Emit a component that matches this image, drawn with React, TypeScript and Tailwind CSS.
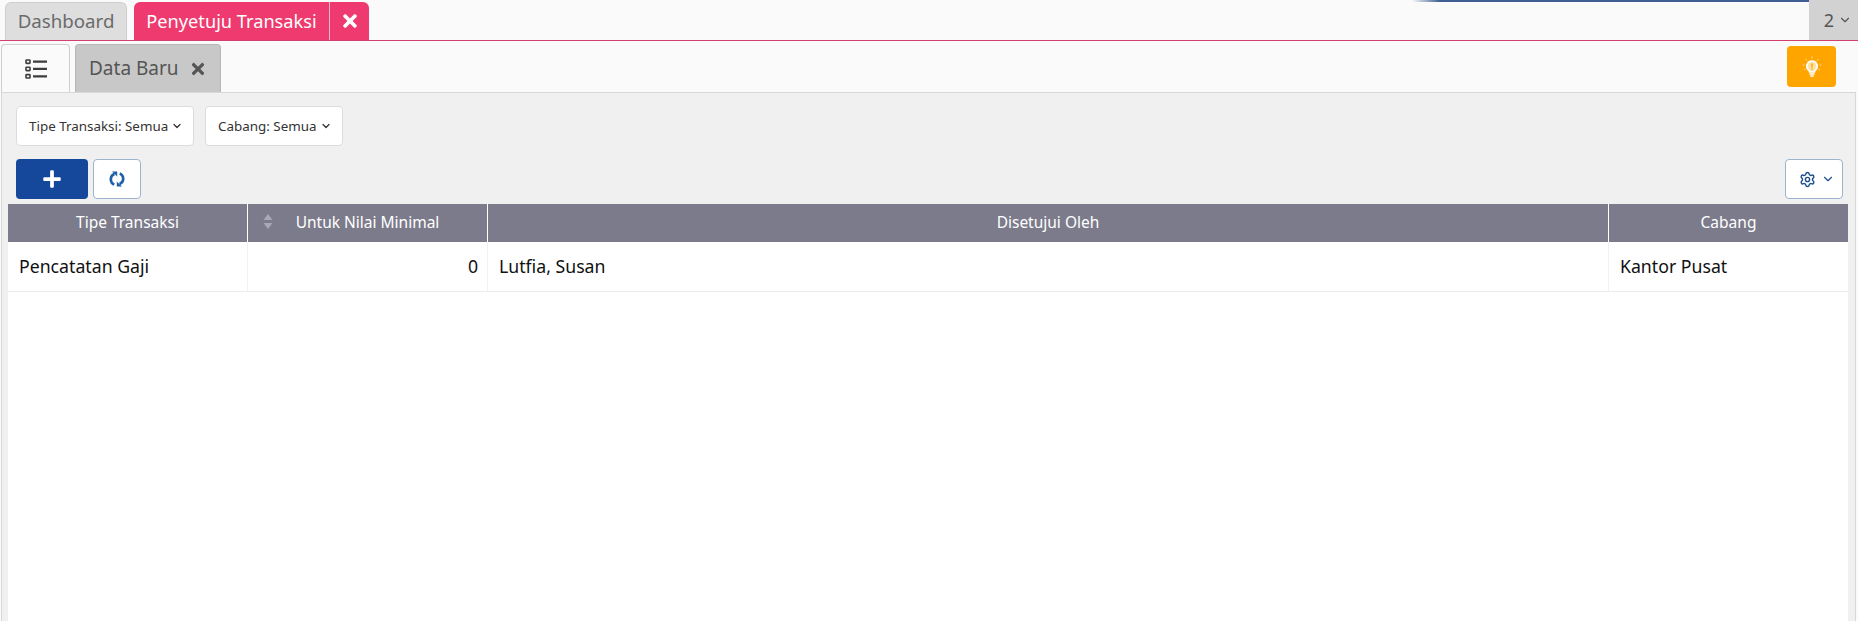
import { ChevronDown, Settings } from 'lucide-react';
import { FaPlus, FaTimes } from 'react-icons/fa';

const font = "font-['Noto_Sans',sans-serif]";

const ListIcon = () => (
  <svg width="24" height="22" viewBox="0 0 24 22" fill="none" stroke="#3d3d3d" strokeWidth="2">
    <rect x="2" y="2" width="4" height="3.4" rx="0.6" strokeWidth="1.6" />
    <rect x="2" y="9.2" width="4" height="3.4" rx="0.6" strokeWidth="1.6" />
    <rect x="2" y="16.6" width="4" height="3.4" rx="0.6" strokeWidth="1.6" />
    <path d="M9 3.6h14M9 10.9h14M9 18.3h14" strokeWidth="2.2" />
  </svg>
);

const BulbIcon = () => (
  <svg width="20" height="22" viewBox="0 0 20 22" fill="none" stroke="#fff">
    <path d="M10 5a5.2 5.2 0 0 0-3.2 9.3c.6.5.8 1 .8 1.7h4.8c0-.7.2-1.2.8-1.7A5.2 5.2 0 0 0 10 5z" fill="#ffe2a8" strokeWidth="1.6" />
    <path d="M8 18h4M8.8 20h2.4" strokeWidth="1.6" strokeLinecap="round" />
    <path d="M10 7.5v4" stroke="#ffa500" strokeWidth="1.5" />
    <path d="M10 12.6v1.2" stroke="#ffa500" strokeWidth="1.5" />
    <path d="M10 .5v2M3.5 3l1.3 1.4M16.5 3l-1.3 1.4M.6 9h2M17.4 9h2M2 14l1.5-.8M18 14l-1.5-.8" strokeWidth="1" opacity="0.65" />
  </svg>
);

const SyncIcon = () => (
  <svg width="16" height="16" viewBox="0 0 16 16" fill="none" stroke="#1f5fa8" strokeWidth="2.6">
    <path d="M5.2 13.6C.6 11.4.6 5 5.4 3" />
    <path d="M10.8 2.4c4.6 2.2 4.6 8.6 -.2 10.6" />
    <path d="M3 .6h5.2v4.8z" fill="#1f5fa8" stroke="none" />
    <path d="M13 15.4H7.8v-4.8z" fill="#1f5fa8" stroke="none" />
  </svg>
);

const SortIcon = () => (
  <svg width="10" height="15" viewBox="0 0 10 15" fill="#a9a9b6">
    <path d="M5 0l4.5 6h-9zM5 15L.5 9h9z" />
  </svg>
);

const Filter = ({ label, className }: { label: string; className: string }) => (
  <button
    type="button"
    className={`flex h-10 items-center justify-between rounded border border-[#dcdcdc] bg-white pl-[12px] pr-[10px] text-[13.4px] text-[#333] ${className}`}
  >
    {label}
    <ChevronDown className="h-3 w-3" strokeWidth={2.5} />
  </button>
);

export default function App() {
  return (
    <div className={`flex h-[621px] w-[1858px] flex-col overflow-hidden bg-[#fafafa] ${font}`}>
      {/* top tabs */}
      <div className="relative flex h-[41px] shrink-0 items-end justify-between border-b border-[#d1406e] pl-[5px]">
        <div className="absolute right-0 top-0 h-[2px] w-[446px] bg-[linear-gradient(to_right,#fafafa,#3f6090_28px)]" />
        <div className="flex gap-[7px]">
          <div className="flex h-[38px] w-[122px] items-center justify-center rounded-t-md border border-b-0 border-[#cfcfcf] bg-[#dedede] text-[18.7px] text-[#6b6b6b]">
            Dashboard
          </div>
          <div className="flex h-[38px] w-[235px] items-center rounded-t-md bg-[#ee3a6e] text-[18.2px] text-white">
            <span className="w-[196px] border-r border-[#f8b4c8] text-center leading-[38px]">Penyetuju Transaksi</span>
            <span className="flex flex-1 justify-center">
              <FaTimes className="h-5 w-5" />
            </span>
          </div>
        </div>
        <div className="relative flex h-10 w-[49px] items-center justify-end gap-[4px] bg-[#d2d2d2] pr-[6px] text-lg text-[#555]">
          2
          <ChevronDown className="h-[14px] w-[14px]" strokeWidth={2} />
        </div>
      </div>

      {/* second row */}
      <div className="flex h-[51px] shrink-0 items-end justify-between pl-px pr-[22px]">
        <div className="flex gap-[5px]">
          <div className="flex h-12 w-[69px] items-center justify-center rounded-t border border-b-0 border-[#cfcfcf] bg-[#fafafa]">
            <ListIcon />
          </div>
          <div className="flex h-12 w-[146px] items-center gap-[10px] rounded-t border border-b-0 border-[#b8b8b8] bg-[#c8c8c8] pl-[13px] text-[19px] text-[#555]">
            Data Baru
            <FaTimes className="h-[18px] w-[18px]" />
          </div>
        </div>
        <div className="mb-[5px] flex h-[41px] w-[49px] items-center justify-center rounded bg-[#ffa500]">
          <BulbIcon />
        </div>
      </div>

      {/* content panel */}
      <div className="ml-px mr-[2px] flex min-h-0 flex-1 flex-col border-x border-t border-[#d8d8d8] bg-[#f0f0f0] pt-[13px]">
        <div className="flex gap-[11px] pl-[14px]">
          <Filter label="Tipe Transaksi: Semua" className="w-[178px]" />
          <Filter label="Cabang: Semua" className="w-[138px]" />
        </div>

        <div className="mt-[13px] flex justify-between pl-[14px] pr-[12px]">
          <div className="flex gap-[5px]">
            <button type="button" className="flex h-10 w-[72px] items-center justify-center rounded bg-[#15479a] text-white">
              <FaPlus className="h-5 w-5" />
            </button>
            <button type="button" className="flex h-10 w-[48px] items-center justify-center rounded border border-[#9db4cf] bg-white">
              <SyncIcon />
            </button>
          </div>
          <button type="button" className="flex h-10 w-[58px] items-center justify-end gap-[5px] rounded border border-[#9db4cf] bg-white pr-[7px] text-[#1f4e8c]">
            <Settings className="h-[17px] w-[17px]" strokeWidth={2} />
            <ChevronDown className="h-[14px] w-[14px]" strokeWidth={2} />
          </button>
        </div>

        <div className="ml-[6px] mr-[7px] mt-[5px] flex-1 bg-white">
          <div className="grid h-[38px] grid-cols-[240px_240px_1121px_239px] bg-[#7c7b8b] text-[15.5px] text-white">
            <div className="flex items-center justify-center border-r border-white">Tipe Transaksi</div>
            <div className="relative flex items-center justify-center border-r border-white">
              <span className="absolute left-[15px] top-[10px]">
                <SortIcon />
              </span>
              Untuk Nilai Minimal
            </div>
            <div className="flex items-center justify-center border-r border-white">Disetujui Oleh</div>
            <div className="flex items-center justify-center">Cabang</div>
          </div>
          <div className="grid h-[50px] grid-cols-[240px_240px_1121px_239px] border-b border-[#ebebeb] text-[17.7px] text-[#111]">
            <div className="flex items-center border-r border-[#f2f2f2] pl-[11px]">Pencatatan Gaji</div>
            <div className="flex items-center justify-end border-r border-[#f2f2f2] pr-[9px]">0</div>
            <div className="flex items-center border-r border-[#f2f2f2] pl-[11px]">Lutfia, Susan</div>
            <div className="flex items-center pl-[11px]">Kantor Pusat</div>
          </div>
        </div>
      </div>
    </div>
  );
}
